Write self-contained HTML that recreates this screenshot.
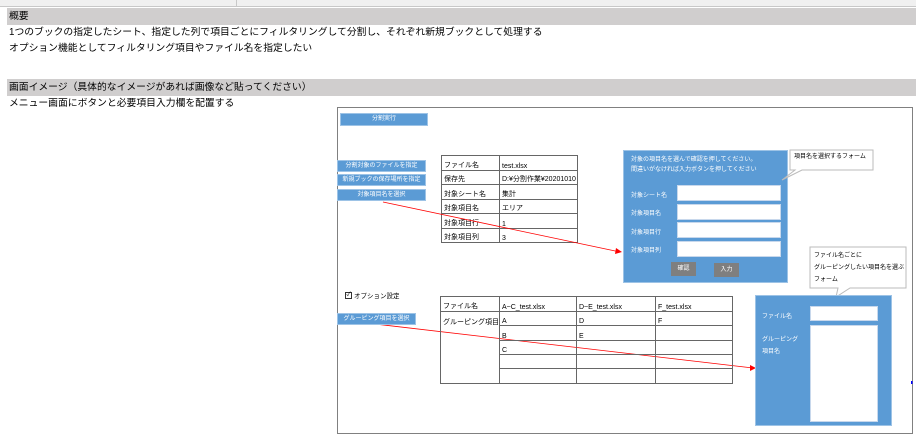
<!DOCTYPE html>
<html><head><meta charset="utf-8"><style>
*{margin:0;padding:0;box-sizing:border-box}
body{width:916px;height:439px;background:#fff;position:relative;overflow:hidden;font-family:"Liberation Sans","Noto Sans CJK JP",sans-serif;color:#000}
.a{position:absolute}
.t{font-size:9.8px;line-height:16px;white-space:nowrap}
.btn{position:absolute;background:#5b9bd5;color:#fff;font-size:6px;text-align:center;white-space:nowrap;border:1px solid #9dc3e6}
table{position:absolute;border-collapse:collapse;font-size:7px;table-layout:fixed}
td{border:1px solid #666;padding:0 2px;vertical-align:bottom;white-space:nowrap;overflow:hidden}
.in{position:absolute;background:#fff;border:1px solid #c8d8ec}
.lbl{position:absolute;color:#fff;font-size:6px;white-space:nowrap}
.gb{position:absolute;background:#7f7f7f;color:#fff;font-size:6px;text-align:center;line-height:14px}
</style></head><body>
<div class="a" style="left:0;top:0;width:916px;height:7px;background:#f0f0f0;border-bottom:1px solid #c8c8c8"></div>
<div class="a" style="left:236px;top:0;width:1px;height:7px;background:#c8c8c8"></div>
<div class="a" style="left:7px;top:8px;width:909px;height:17px;background:#d0cece"></div>
<div class="a t" style="left:9px;top:9px">概要</div>
<div class="a t" style="left:9px;top:25px">1つのブックの指定したシート、指定した列で項目ごとにフィルタリングして分割し、それぞれ新規ブックとして処理する</div>
<div class="a t" style="left:9px;top:41px">オプション機能としてフィルタリング項目やファイル名を指定したい</div>
<div class="a" style="left:7px;top:79px;width:909px;height:17px;background:#d0cece"></div>
<div class="a t" style="left:9px;top:80px">画面イメージ（具体的なイメージがあれば画像など貼ってください）</div>
<div class="a t" style="left:9px;top:96px">メニュー画面にボタンと必要項目入力欄を配置する</div>

<div class="a" style="left:337px;top:107px;width:576px;height:327px;border:1px solid #808080"></div>

<div class="btn" style="left:340px;top:113px;width:88px;height:13px;line-height:11px">分割実行</div>
<div class="btn" style="left:337px;top:160px;width:89px;height:12px;line-height:10px">分割対象のファイルを指定</div>
<div class="btn" style="left:337px;top:174px;width:89px;height:12px;line-height:10px">新規ブックの保存場所を指定</div>
<div class="btn" style="left:337px;top:189px;width:89px;height:12px;line-height:10px">対象項目名を選択</div>

<table style="left:441px;top:155px;width:136px">
<colgroup><col style="width:58px"><col style="width:78px"></colgroup>
<tr style="height:15px"><td>ファイル名</td><td>test.xlsx</td></tr>
<tr style="height:14px"><td>保存先</td><td>D:¥分割作業¥20201010</td></tr>
<tr style="height:15px"><td>対象シート名</td><td>集計</td></tr>
<tr style="height:14px"><td>対象項目名</td><td>エリア</td></tr>
<tr style="height:15px"><td>対象項目行</td><td>1</td></tr>
<tr style="height:14px"><td>対象項目列</td><td>3</td></tr>
</table>

<div class="a" style="left:623px;top:150px;width:165px;height:133px;background:#5b9bd5;border:1px solid #9dc3e6"></div>
<div class="lbl" style="left:631px;top:155px;line-height:10px">対象の項目名を選んで確認を押してください。<br>間違いがなければ入力ボタンを押してください</div>
<div class="lbl" style="left:631px;top:190px">対象シート名</div>
<div class="lbl" style="left:631px;top:208px">対象項目名</div>
<div class="lbl" style="left:631px;top:227px">対象項目行</div>
<div class="lbl" style="left:631px;top:245px">対象項目列</div>
<div class="in" style="left:677px;top:185px;width:104px;height:16px"></div>
<div class="in" style="left:677px;top:204px;width:104px;height:16px"></div>
<div class="in" style="left:677px;top:222px;width:104px;height:16px"></div>
<div class="in" style="left:677px;top:241px;width:104px;height:16px"></div>
<div class="gb" style="left:671px;top:262px;width:25px;height:14px">確認</div>
<div class="gb" style="left:714px;top:263px;width:25px;height:14px">入力</div>

<svg class="a" style="left:0;top:0" width="916" height="439">
<polygon points="790,150 873,150 873,170 802,170 782,180 795,170 790,170" fill="#fff" stroke="#bbb" stroke-width="1"/>
<polygon points="810,247 906,247 906,288 850,288 836,297 838,288 810,288" fill="#fff" stroke="#bbb" stroke-width="1"/>
<line x1="383" y1="202" x2="620" y2="252" stroke="#f00" stroke-width="0.8"/>
<polygon points="622,252 616,248 615,254" fill="#f00"/>
<line x1="375" y1="324" x2="753" y2="368" stroke="#f00" stroke-width="0.8"/>
<polygon points="756,368 750,365 750,371" fill="#f00"/>
<rect x="911" y="381" width="1.5" height="3" fill="#00f"/>
</svg>
<div class="a" style="left:794px;top:152px;font-size:6px;line-height:11px">項目名を選択するフォーム</div>
<div class="a" style="left:814px;top:250px;font-size:6px;line-height:12px;white-space:nowrap">ファイル名ごとに<br>グルーピングしたい項目名を選ぶ<br>フォーム</div>

<div class="a" style="left:345px;top:292px;width:7px;height:7px;border:1px solid #333;font-size:6px;line-height:5px;text-align:center">✓</div>
<div class="a" style="left:354px;top:290px;font-size:6.5px">オプション設定</div>
<div class="btn" style="left:337px;top:313px;width:79px;height:12px;line-height:10px">グルーピング項目を選択</div>

<table style="left:440px;top:296px;width:292px">
<colgroup><col style="width:59px"><col style="width:77px"><col style="width:79px"><col style="width:77px"></colgroup>
<tr style="height:15px"><td>ファイル名</td><td>A~C_test.xlsx</td><td>D~E_test.xlsx</td><td>F_test.xlsx</td></tr>
<tr style="height:14px"><td rowspan="5" style="vertical-align:top;padding-top:5px">グルーピング項目名</td><td>A</td><td>D</td><td>F</td></tr>
<tr style="height:15px"><td>B</td><td>E</td><td></td></tr>
<tr style="height:14px"><td>C</td><td></td><td></td></tr>
<tr style="height:14px"><td></td><td></td><td></td></tr>
<tr style="height:15px"><td></td><td></td><td></td></tr>
</table>

<div class="a" style="left:755px;top:295px;width:137px;height:131px;background:#5b9bd5;border:1px solid #9dc3e6"></div>
<div class="lbl" style="left:762px;top:311px">ファイル名</div>
<div class="lbl" style="left:762px;top:334px;line-height:12px">グルーピング<br>項目名</div>
<div class="in" style="left:810px;top:306px;width:68px;height:15px"></div>
<div class="in" style="left:810px;top:325px;width:68px;height:97px"></div>
</body></html>
